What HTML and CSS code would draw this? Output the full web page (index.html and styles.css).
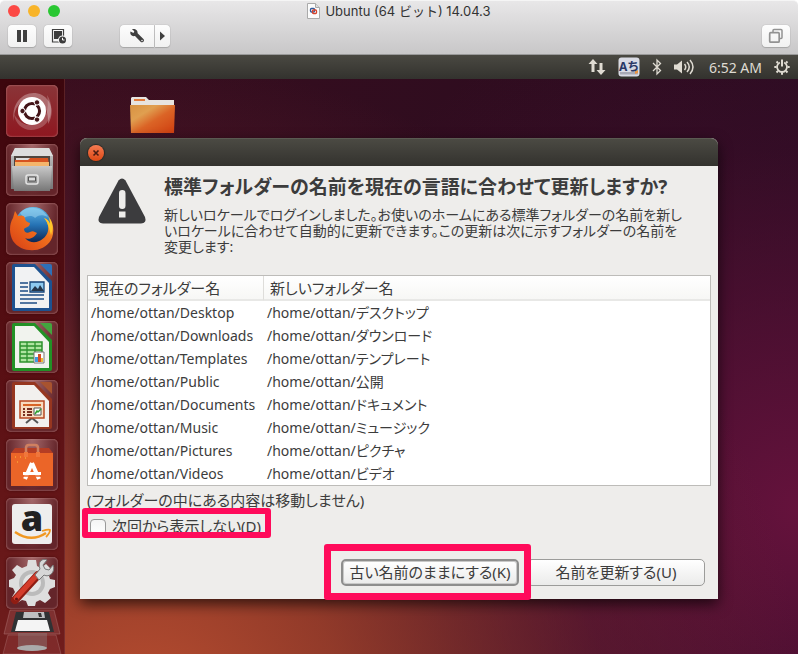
FILE: index.html
```html
<!DOCTYPE html>
<html lang="ja">
<head>
<meta charset="utf-8">
<title>Ubuntu (64 ビット) 14.04.3</title>
<link rel="stylesheet" href="styles.css">
</head>
<body>
<header class="host">
  <div class="titlebar">
    <div class="lights">
      <button class="light red" aria-label="閉じる"></button>
      <button class="light yellow" aria-label="しまう"></button>
      <button class="light green" aria-label="拡大"></button>
    </div>
    <h1 class="host-title">
      <svg width="13" height="16" viewBox="0 0 13 16"><path d="M.5.5h8l4 4v11H.5z" fill="#fbfbfb" stroke="#aaa"/><path d="M8.500.5v4h4" fill="#ddd" stroke="#aaa"/><rect x="3.500" y="5.500" width="4" height="3.500" rx="1" fill="none" stroke="#31599b" stroke-width="1.300"/><rect x="5.500" y="7" width="4" height="3.500" rx="1" fill="none" stroke="#d6432c" stroke-width="1.300"/></svg>
      <span>Ubuntu (64 ビット) 14.04.3</span>
    </h1>
  </div>
  <div class="toolbar">
    <button class="tool" aria-label="一時停止"><svg width="28" height="22" viewBox="0 0 28 22"><path d="M9 5h4v12H9zM15 5h4v12h-4z" fill="#404040"/></svg></button>
    <button class="tool" aria-label="スナップショット"><svg width="28" height="22" viewBox="0 0 28 22"><path d="M8.500 4.500h11v12.500h-11z" fill="none" stroke="#404040" stroke-width="1.200"/><path d="M10 6h8v8h-8z" fill="#3b3b3b"/><circle cx="18.500" cy="15" r="4.500" fill="#f4f4f4"/><circle cx="18.500" cy="15" r="3.500" fill="#3b3b3b"/><path d="M18.500 12.800V15h2" fill="none" stroke="#fff"/></svg></button>
    <div class="split">
      <button class="tool settings" aria-label="設定"><svg width="34" height="22" viewBox="0 0 34 22"><path d="M10.500 6.500l3 1.500.8-1.800-2.300-2c3-1 6 1 5.600 4.100l5.800 5.700c1.800 2-1 4.500-2.800 2.800L15 11c-3 .8-5.500-1.500-4.500-4.500z" fill="#404040"/><circle cx="22" cy="15.500" r=".8" fill="#eee"/></svg></button>
      <button class="tool more" aria-label="メニュー"><svg width="15" height="22" viewBox="0 0 15 22"><path d="M5 6.500v9l5-4.500z" fill="#404040"/></svg></button>
    </div>
    <button class="tool end" aria-label="ウインドウ"><svg width="28" height="22" viewBox="0 0 28 22"><path d="M11 7.500V5.500q0-1 1-1h7q1 0 1 1v7q0 1-1 1h-1.500" fill="none" stroke="#929292" stroke-width="1.500"/><rect x="7.700" y="7.700" width="9.500" height="9.500" rx="1" fill="none" stroke="#929292" stroke-width="1.700"/></svg></button>
  </div>
</header>

<nav class="panel" aria-label="インジケーター">
  <svg width="18" height="18" viewBox="0 0 18 18" fill="#dfdbd2"><path d="M5 1l4.500 5H6.500v8h-3V6H.5zM13 17l4.500-5h-3V5h-3v7h-3z"/></svg>
  <svg class="ime" width="22" height="20" viewBox="0 0 22 20"><rect x=".5" y=".5" width="21" height="19" rx="3" fill="#d9dbe4"/><path d="M2 15h18v2.500H2z" fill="#a7a9b5"/><path d="M17 14l3-1 0 3-3 1z" fill="#eb9444"/><text x="1" y="14">Aち</text></svg>
  <svg width="10" height="18" viewBox="0 0 10 18"><path d="M1 5l7.500 7.500L5 16V2l3.500 3.500L1 13" fill="none" stroke="#dfdbd2" stroke-width="1.300"/></svg>
  <svg width="23" height="18" viewBox="0 0 23 18"><path d="M0 6.500h3L8 2.500v13l-5-4H0z" fill="#dfdbd2"/><path d="M10.500 6q2.500 3 0 6M13 4q4.500 5 0 10M16 2q6 7 0 14" fill="none" stroke="#dfdbd2" stroke-width="1.500"/></svg>
  <time>6:52 AM</time>
  <svg width="16" height="16" viewBox="0 0 16 16" fill="none" stroke="#dfdbd2"><path d="M5.800 3.500a5 5 0 1 0 4.400 0" stroke-width="1.800"/><path d="M8 .5v7M.3 8h2.200M13.500 8h2.200M8 13.500v2.200M2.500 2.500l1.500 1.500M13.500 2.500L12 4M2.500 13.500L4 12M13.500 13.500L12 12" stroke-width="2"/></svg>
</nav>

<main class="workspace">
  <nav class="launcher" aria-label="ランチャー">
    <button class="tile dash" aria-label="Dash"><svg viewBox="0 0 52 52"><path d="M8 37C4 16 21 3 36 10c11 6 12 20 6 29 1-11-3-24-17-25C14 14 7 24 8 37z" fill="#fff" opacity=".3"/><path d="M41 10c10 15 2 35-16 35C16 45 9 38 8 29c6 10 14 13 22 10 9-3 14-13 11-29z" fill="#fff" opacity=".22"/><circle cx="26" cy="26" r="14" fill="#fff"/><circle cx="26" cy="26" r="7.500" fill="none" stroke="#431418" stroke-width="3.200"/><path d="M26 26h-9M26 26l5-8M26 26l5 8" stroke="#fff" stroke-width="1.500"/><circle cx="26" cy="26" r="5.800" fill="#fff"/><g fill="#431418" stroke="#fff"><circle cx="16.500" cy="26" r="2.700"/><circle cx="31" cy="17.400" r="2.700"/><circle cx="31" cy="34.600" r="2.700"/></g></svg></button>
    <button class="tile" aria-label="ファイル"><svg viewBox="0 0 52 52"><defs><linearGradient id="metal" x2="0" y2="1"><stop stop-color="#c9c9c9"/><stop offset="1" stop-color="#777"/></linearGradient></defs><path d="M9 4h34l4 8v33H5V12z" fill="url(#metal)"/><path d="M9 4h34l4 8H5z" fill="#ddd"/><path d="M8 12h36v11H8z" fill="#4e4640"/><path d="M10 14h32v7H10z" fill="#ddd"/><path d="M9 16h13l2-2h18l1 7H9z" fill="#d65320"/><path d="M9 18h34v4H9z" fill="#f5b56b"/><path d="M6 22h40l-2 25H8z" fill="url(#metal)"/><rect x="20" y="31" width="12" height="9" rx="2" fill="none" stroke="#e5e5e5" stroke-width="1.500"/><path d="M22.500 33h7v4h-7z" fill="#ddd" stroke="#555"/></svg></button>
    <button class="tile" aria-label="Firefox"><svg viewBox="0 0 52 52"><defs><linearGradient id="fire" x1="0" y1="1" x2="1" y2="0"><stop stop-color="#d63d15"/><stop offset=".6" stop-color="#f1701d"/><stop offset="1" stop-color="#ffd63e"/></linearGradient><linearGradient id="globe" x2="0" y2="1"><stop stop-color="#66bce9"/><stop offset=".5" stop-color="#2572b4"/><stop offset="1" stop-color="#0b234f"/></linearGradient></defs><circle cx="27" cy="22" r="18" fill="url(#globe)"/><path d="M14 10c6-8 22-7 28 4-6-3-10-2-13 1-3-3-8-2-11 0z" fill="#a8dcf4" opacity=".5"/><path d="M41 12c7 6 8 18 4 25-8 14-30 13-38 1C3 31 3 21 7 15l2-7 3 5c3-1 6-1 7 2 0 3 2 4 5 5 0 4-4 4-6 6 0 3 3 5 6 3 3-2 5 0 7 1-4 7-10 6-12 5 8 9 21 2 23-7 1-6-1-10-4-13 3 1 5 3 6 6 1-4-1-7-3-9z" fill="url(#fire)"/><path d="M41 12c7 8 6 14 4 20-2-8-4-14-7-17 3 1 5 3 6 6 0-4-1-7-3-9z" fill="#ffc62a"/></svg></button>
    <button class="tile" aria-label="Writer"><svg viewBox="0 0 52 52"><path d="M8 2h21l17 17v28q0 2-2 2H8q-2 0-2-2V4q0-2 2-2z" fill="#1d5290"/><path d="M9 5h19l15 16v25H9z" fill="#f1f2f3"/><path d="M34 2h10q2 0 2 2v10z" fill="#2e70b8"/><path d="M14 21h8M14 25h8M14 29h8M14 33h24M14 37h24M14 41h17" stroke="#1c4c85" stroke-width="1.500"/><path d="M24 20h14v10H24z" fill="#8ecaf0" stroke="#164275" stroke-width="1.300"/><path d="M25 29l4-5 3 3 2-4 4 6z" fill="#26364a"/></svg></button>
    <button class="tile" aria-label="Calc"><svg viewBox="0 0 52 52"><path d="M8 2h21l17 17v29q0 2-2 2H8q-2 0-2-2V4q0-2 2-2z" fill="#229126"/><path d="M9 5h19l15 16v26H9z" fill="#f1f3ee"/><path d="M34 2h10q2 0 2 2v10z" fill="#43a53e"/><path d="M14 21h22v20H14z" fill="#aee4a0" stroke="#2c912d" stroke-width="1.500"/><path d="M14 25h22M14 29h22M14 33h22M14 37h22M21 21v20M29 21v20" stroke="#2c912d" stroke-width="1.300"/><path d="M28 31h10v11H28z" fill="#fff" stroke="#777"/><path d="M29 36h3v5h-3z" fill="#4298df"/><path d="M32 33h3v8h-3z" fill="#d54e24"/><path d="M35 37h2v4h-2z" fill="#efba32"/></svg></button>
    <button class="tile" aria-label="Impress"><svg viewBox="0 0 52 52"><path d="M8 2h21l17 17v28q0 2-2 2H8q-2 0-2-2V4q0-2 2-2z" fill="#963620"/><path d="M9 5h19l15 16v26H9z" fill="#f2f0ee"/><path d="M34 2h10q2 0 2 2v10z" fill="#a8532f"/><path d="M26 38l-6 5M26 38l6 5" stroke="#555" stroke-width="2"/><path d="M14 21h24v17H14z" fill="#f8dcc0" stroke="#b84720" stroke-width="1.500"/><path d="M17 25h18" stroke="#d86527" stroke-width="2"/><path d="M17 29h2M17 32h2M17 35h2M21 29h5M21 32h5M21 35h5" stroke="#793020" stroke-width="2"/><path d="M28 28h7v7h-7z" fill="#fff" stroke="#555"/><path d="M29 34l2-3 1 1 3-3" fill="none" stroke="#2fa02f" stroke-width="1.500"/></svg></button>
    <button class="tile" aria-label="ソフトウェアセンター"><svg viewBox="0 0 52 52"><path d="M5 14l4-5h34l4 5z" fill="#b53d24"/><path d="M5 14h42v33H5z" fill="#eb6528"/><path d="M20 15V9q0-3 3-3h6q3 0 3 3v6" fill="none" stroke="#d08060" stroke-width="2.500"/><path d="M18 13h4v5h-4zM30 13h4v5h-4z" fill="#f0763b"/><path d="M26 24l-7 16M26 24l7 16" stroke="#fff" stroke-width="4"/><path d="M17 34.500h18" stroke="#fff" stroke-width="3"/><path d="M16 37h20" stroke="#eb6528" stroke-width="1.500"/><path d="M9 18h1M14 18h1M19 19h1M11 23h1" stroke="#ffc33c"/></svg></button>
    <button class="tile" aria-label="Amazon"><svg viewBox="0 0 52 52"><rect x="6" y="6" width="40" height="40" rx="3" fill="#eee"/><text class="amazon" x="26" y="33" text-anchor="middle">a</text><path d="M9 34q16 11 31 1" fill="none" stroke="#f09822" stroke-width="2.500"/><path d="M36 33q7-2 8-1 0 3-4 7" fill="none" stroke="#f09822" stroke-width="1.800"/></svg></button>
    <button class="tile" aria-label="システム設定"><svg viewBox="0 0 52 52"><path d="M22 3h8l1 6 4 2 5-4 6 6-3 6 1 3 5 1v7l-5 2-2 4 3 5-6 5-5-3-4 2-1 4h-7l-2-5-4-1-5 3-5-6 3-5-2-4-4-1v-7l5-2 2-3-4-5 5-5 5 3 5-2z" fill="#dedede"/><circle cx="26" cy="26" r="13" fill="#bbb"/><circle cx="26" cy="26" r="9" fill="#e4e4e4"/><path d="M9 43L32 18" stroke="#8f1d13" stroke-width="8" stroke-linecap="round"/><path d="M10 41L31 18" stroke="#d43c2b" stroke-width="5" stroke-linecap="round"/><path d="M29 18L34 12C31 4 37 1 41 3l-4 5 2 4 4 1 4-5c3 7-4 13-9 10l-5 5z" fill="#d7d7d7" stroke="#777"/><circle cx="10.500" cy="42" r="1.500" fill="#611"/></svg></button>
    <button class="folded" aria-label="ボリューム"><svg viewBox="0 0 58 46"><path d="M7 1h44l6 24H1z" fill="#aa6262" fill-opacity=".3" stroke="#b17777" stroke-opacity=".45"/><path d="M13 3h33l5 20H8z" fill="#303234"/><path d="M21 3h20l1 6H20z" fill="#bfc1c3"/><path d="M35 4h3l1 4h-3z" fill="#333"/><path d="M15 11h29l3 11H12z" fill="#f4f4f4"/><path d="M5 26h48l5 19H0z" fill="#a55" fill-opacity=".25" stroke="#b17777" stroke-opacity=".4"/><path d="M15 24h29v15H15z" fill="#929292" opacity=".35"/><ellipse cx="29" cy="39" rx="15" ry="3" fill="#aaa"/></svg></button>
  </nav>

  <section class="desktop">
    <svg class="folder" width="48" height="40" viewBox="0 0 48 40" role="img" aria-label="フォルダー"><defs><linearGradient id="folder" x2="1" y2="1"><stop stop-color="#d89242"/><stop offset=".3" stop-color="#e09f50"/><stop offset=".55" stop-color="#db6426"/><stop offset="1" stop-color="#cf3e10"/></linearGradient></defs><path d="M3 3l1-1h14l3 3h25v7H3z" fill="#e7e4e0"/><path d="M6 5h11" stroke="#e37b3a" stroke-width="2"/><path d="M2 10h45l-1 28H3z" fill="url(#folder)"/></svg>

    <div class="dialog" role="dialog" aria-labelledby="question">
      <div class="dialog-bar"><button class="close" aria-label="ダイアログを閉じる"><svg width="16" height="16" viewBox="0 0 16 16"><path d="M5.500 5.500l5 5M10.500 5.500l-5 5" stroke="#4a1c12" stroke-width="1.600"/></svg></button></div>
      <div class="dialog-body">
        <div class="message">
          <svg class="warning" width="48" height="46" viewBox="0 0 48 46"><path d="M20.500 2.500q3.500-4 7 0L47 39q2 6-4 6.500H5Q-1 45 1 39z" fill="#3c3c3e"/><rect x="21" y="12" width="6.500" height="19" rx="3.200" fill="#eeedeb"/><path d="M21 33.500h6.500v6H21z" fill="#eeedeb"/></svg>
          <div>
            <h2 id="question">標準フォルダーの名前を現在の言語に合わせて更新しますか?</h2>
            <p>新しいロケールでログインしました。お使いのホームにある標準フォルダーの名前を新し<br>いロケールに合わせて自動的に更新できます。この更新は次に示すフォルダーの名前を<br>変更します:</p>
          </div>
        </div>
        <table>
          <thead><tr><th scope="col" class="current">現在のフォルダー名</th><th scope="col">新しいフォルダー名</th></tr></thead>
          <tbody>
            <tr><td>/home/ottan/Desktop</td><td>/home/ottan/デスクトップ</td></tr>
            <tr><td>/home/ottan/Downloads</td><td>/home/ottan/ダウンロード</td></tr>
            <tr><td>/home/ottan/Templates</td><td>/home/ottan/テンプレート</td></tr>
            <tr><td>/home/ottan/Public</td><td>/home/ottan/公開</td></tr>
            <tr><td>/home/ottan/Documents</td><td>/home/ottan/ドキュメント</td></tr>
            <tr><td>/home/ottan/Music</td><td>/home/ottan/ミュージック</td></tr>
            <tr><td>/home/ottan/Pictures</td><td>/home/ottan/ピクチャ</td></tr>
            <tr><td>/home/ottan/Videos</td><td>/home/ottan/ビデオ</td></tr>
          </tbody>
        </table>
        <p class="note">(フォルダーの中にある内容は移動しません)</p>
        <div class="again"><input type="checkbox" id="again"><label for="again">次回から表示しない(D)</label></div>
        <div class="actions">
          <div class="marked"><button class="action focused">古い名前のままにする(K)</button></div>
          <button class="action">名前を更新する(U)</button>
        </div>
      </div>
    </div>
  </section>
</main>
</body>
</html>
```
FILE: styles.css
```css
* { box-sizing: border-box; }

body {
  margin: 0;
  height: 100vh;
  display: flex;
  flex-direction: column;
  overflow: hidden;
  background: #fff;
  color: #3c3c3c;
  font: 15px/23px "Noto Sans", "Noto Sans CJK JP", sans-serif;
}

button { padding: 0; border: 0; font: inherit; color: inherit; }
svg { display: block; flex: none; overflow: visible; }
h1, h2, p { margin: 0; }

/* Host window chrome */
.host {
  flex: none;
  padding-bottom: 7px;
  border-radius: 5px 5px 0 0;
  border-top: 1px solid #f5f5f5;
  border-bottom: 1px solid #999;
  background: linear-gradient(#e8e7e8, #c8c7c8);
}
.titlebar {
  display: grid;
  grid-template-columns: 1fr auto 1fr;
  align-items: center;
  height: 24px;
  padding: 0 8px 4px;
}
.lights { display: flex; gap: 8px; }
.light { width: 12px; height: 12px; border-radius: 50%; }
.red { background: #fc4945; }
.yellow { background: #f8b429; }
.green { background: #29c732; }
.host-title {
  display: flex;
  align-items: center;
  gap: 5px;
  font: 13px/20px Inter, "Noto Sans CJK JP", sans-serif;
  color: #333;
}
.toolbar { display: flex; gap: 8px; padding: 0 8px; }
.tool {
  height: 22px;
  border-radius: 4px;
  background: linear-gradient(#fdfdfd, #f1f1f1);
  box-shadow: 0 0 1px #888, 0 1px 1px #aaa;
}
.split { display: flex; margin-left: 40px; gap: 1px; }
.settings { border-radius: 4px 0 0 4px; }
.more { border-radius: 0 4px 4px 0; }
.end { margin-left: auto; }

/* Top panel */
.panel {
  flex: none;
  display: flex;
  align-items: center;
  justify-content: flex-end;
  gap: 12px;
  height: 24px;
  padding: 0 8px;
  background: linear-gradient(#4a4942, #33322e);
  color: #dfdbd2;
  font-size: 14px;
}
.ime text { font: bold 12px "Noto Sans", "Noto Sans CJK JP", sans-serif; fill: #283866; }

/* Desktop */
.workspace {
  flex: 1;
  min-height: 0;
  display: flex;
  background:
    radial-gradient(circle at 18% 112%, #bb4f30 0, #a0412bdd 22%, #72243066 50%, transparent 72%),
    radial-gradient(circle at 100% 75%, #65123c 0, #52103644 40%, transparent 60%),
    linear-gradient(100deg, #3a0e1e, #260b20);
}
.launcher {
  flex: none;
  width: 65px;
  display: flex;
  flex-direction: column;
  align-items: center;
  gap: 7px;
  padding: 6px 1px 0 0;
  border-right: 1px solid #8a4a4a66;
  background: linear-gradient(#3c060d, #5b1014 55%, #701d1c);
}
.tile {
  flex: none;
  width: 52px;
  height: 52px;
  border-radius: 5px;
  background: radial-gradient(ellipse at 50% 0, #a4686a, #64252a 70%);
  box-shadow: inset 0 0 2px #c89090, 0 0 3px #3008;
}
.dash { background: linear-gradient(#8a3538, #8f1720); }
.folded { flex: none; width: 58px; height: 46px; margin-top: -7px; background: none; }
.amazon { font: 800 36px "Open Sans", sans-serif; fill: #222; }
.desktop { position: relative; flex: 1; }
.folder { margin: 16px 0 0 63px; }

/* Dialog window */
.dialog {
  position: absolute;
  top: 59px;
  left: 15px;
  right: 80px;
  border-radius: 7px 7px 0 0;
  background: #eeedeb;
  box-shadow: 0 5px 14px #000a;
}
.dialog-bar {
  display: flex;
  align-items: center;
  height: 28px;
  padding: 0 8px;
  border-radius: 7px 7px 0 0;
  border-top: 1px solid #5b5a52;
  background: linear-gradient(#4b4a43, #33322e);
}
.close {
  width: 16px;
  height: 16px;
  border-radius: 50%;
  background: linear-gradient(#f57b52, #dd4814);
  box-shadow: 0 0 1px 1px #2a2925;
}
.dialog-body {
  padding: 10px 7px 13px;
  font-feature-settings: "palt";
}
.message { display: flex; gap: 18px; padding: 0 0 20px 11px; }
.warning { margin-top: 2px; }
h2 { font-size: 19px; line-height: 22px; }
.message p { margin-top: 9px; font-size: 14px; line-height: 16px; white-space: nowrap; }

table {
  width: 100%;
  border: 1px solid #bdbcb9;
  border-spacing: 0;
  table-layout: fixed;
  background: #fff;
}
th {
  height: 25px;
  padding: 0 6px;
  border-bottom: 2px solid #e8e8e6;
  background: linear-gradient(#fff, #f7f7f5);
  font-weight: normal;
  line-height: 22px;
  text-align: left;
}
.current { width: 176px; border-right: 1px solid #deddda; }
td { height: 23px; padding: 0 3px; font-size: 14px; white-space: nowrap; }

.note { margin-top: 3px; }
.again {
  position: relative;
  display: flex;
  align-items: center;
  gap: 6px;
  width: max-content;
  margin-top: 3px;
  padding-left: 3px;
}
.again input {
  appearance: none;
  width: 16px;
  height: 16px;
  margin: 0;
  border: 1px solid #999;
  border-radius: 4px;
  background: linear-gradient(#f4f4f4, #fff);
}
.again::after,
.marked::after {
  content: "";
  position: absolute;
  border: 6px solid #ff0b5b;
  border-radius: 3px;
  pointer-events: none;
}
.again::after { inset: -7px -10px 0 -5px; }

.actions { display: flex; justify-content: flex-end; gap: 8px; margin: 21px 6px 0 0; }
.marked { position: relative; }
.marked::after { inset: -15px -12px -14px -17px; border-width: 7px; }
.action {
  height: 27px;
  width: 178px;
  border: 1px solid #9c9c9a;
  border-radius: 5px;
  background: linear-gradient(#fff, #ebebea);
}
.focused { border: 2px solid #8e8e8d; box-shadow: inset 0 0 0 1px #c9c9c8; }
```
